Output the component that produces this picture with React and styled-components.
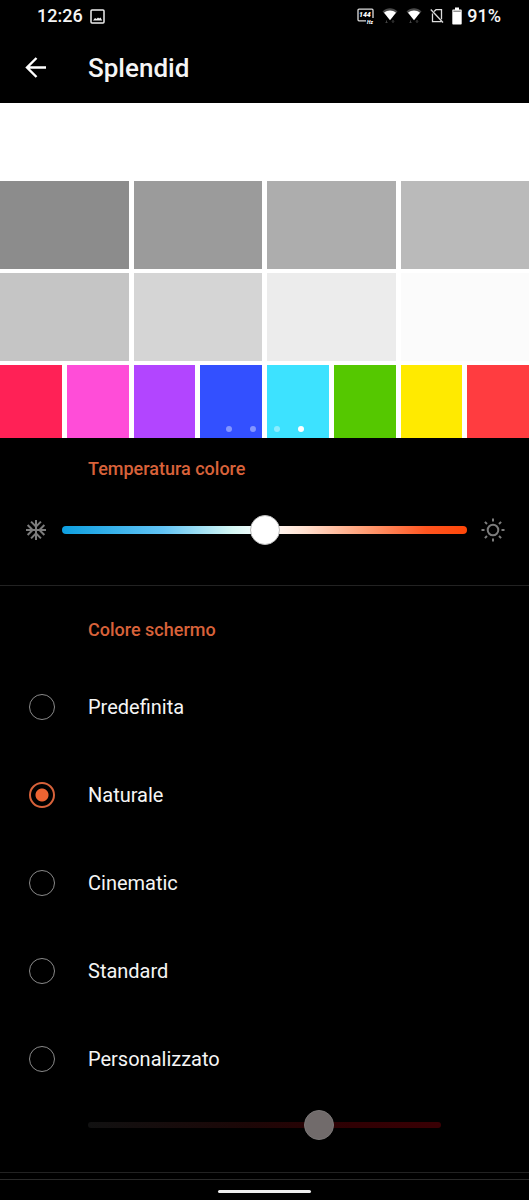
import { useState } from "react";
import styled, { createGlobalStyle } from "styled-components";

const GlobalStyle = createGlobalStyle`
  * {
    box-sizing: border-box;
  }

  body {
    margin: 0;
    background: #000;
    color: #f5f5f5;
    font-family: Roboto, "Liberation Sans", sans-serif;
  }
`;

const Screen = styled.div`
  display: flex;
  flex-direction: column;
  width: 100%;
  background: #000;
`;

const StatusBar = styled.div`
  display: flex;
  align-items: center;
  justify-content: space-between;
  height: 32px;
  padding: 0 28px 0 37px;
  font-size: 18px;
  font-weight: 500;
  line-height: 32px;
`;

const StatusGroup = styled.div`
  display: flex;
  align-items: center;
  gap: ${({ $gap }) => $gap}px;
`;

const StatusIcon = styled.svg`
  display: block;
  flex: none;
`;

const Header = styled.header`
  display: flex;
  align-items: center;
  gap: 36px;
  height: 71px;
  padding: 0 20px;
`;

const BackButton = styled.button`
  display: grid;
  place-items: center;
  width: 32px;
  height: 32px;
  padding: 0;
  border: 0;
  background: none;
  color: #fff;
  cursor: pointer;
`;

const Title = styled.h1`
  margin: 0;
  font-size: 26px;
  font-weight: 500;
  line-height: 32px;
`;

const Preview = styled.div`
  position: relative;
  display: flex;
  flex-direction: column;
  gap: 4px;
  padding-top: 78px;
  background: #fff;
`;

const SwatchRow = styled.div`
  display: flex;
  gap: 5px;
  height: ${({ $height }) => $height}px;
`;

const Swatch = styled.div`
  flex: 1;
  background: ${({ $color }) => $color};
`;

const Dots = styled.div`
  position: absolute;
  left: 0;
  right: 0;
  bottom: 6px;
  display: flex;
  justify-content: center;
  gap: 18px;
`;

const Dot = styled.button`
  width: 6px;
  height: 6px;
  padding: 0;
  border: 0;
  border-radius: 50%;
  background: ${({ $active }) => ($active ? "#fff" : "rgba(255, 255, 255, 0.4)")};
`;

const Section = styled.section`
  padding: ${({ $padding }) => $padding};
  border-bottom: 1px solid #222;
`;

const SectionTitle = styled.h2`
  margin: 0;
  padding-left: 88px;
  color: #d8623a;
  font-size: 18px;
  font-weight: 500;
  line-height: 24px;
`;

const TemperatureRow = styled.div`
  display: flex;
  align-items: center;
  gap: 14px;
  margin-top: 33px;
  padding: 0 24px;
  color: #7c7c7c;
`;

const Slider = styled.input`
  appearance: none;
  flex: 1;
  display: block;
  width: 100%;
  min-width: 0;
  height: 32px;
  margin: 0;
  background: none;

  &::-webkit-slider-runnable-track {
    height: ${({ $thickness }) => $thickness}px;
    border-radius: 4px;
    background: ${({ $track }) => $track};
  }

  &::-webkit-slider-thumb {
    appearance: none;
    width: 30px;
    height: 30px;
    margin-top: ${({ $thickness }) => ($thickness - 30) / 2}px;
    border: 1px solid ${({ $edge }) => $edge};
    border-radius: 50%;
    background: ${({ $thumb }) => $thumb};
  }
`;

const Options = styled.div`
  margin-top: 21px;
`;

const Option = styled.label`
  display: flex;
  align-items: center;
  gap: 33px;
  height: 88px;
  padding-left: 29px;
  font-size: 20px;
  line-height: 24px;
  cursor: pointer;
`;

const Radio = styled.input`
  appearance: none;
  width: 26px;
  height: 26px;
  margin: 0;
  border: 1px solid #8a8a8a;
  border-radius: 50%;

  &:checked {
    border: 2px solid #d8623a;
    background: radial-gradient(circle, #ee6432 6px, transparent 7px);
  }
`;

const CustomTint = styled.div`
  padding: 6px 88px 31px;
`;

const Footer = styled.footer`
  display: flex;
  justify-content: center;
  height: 22px;
  margin-top: 6px;
  padding-top: 10px;
  border-top: 1px solid #2a2a2a;
`;

const HomeBar = styled.div`
  width: 93px;
  height: 3px;
  border-radius: 2px;
  background: #eee;
`;

const grays = [
  ["#8c8c8c", "#9b9b9b", "#adadad", "#bababa"],
  ["#c5c5c5", "#d5d5d5", "#ececec", "#fbfbfb"],
];

const colors = [
  "#ff2156",
  "#ff4dd8",
  "#b245ff",
  "#3350ff",
  "#3de2ff",
  "#55c800",
  "#ffea00",
  "#ff3c40",
];

const modes = [
  "Predefinita",
  "Naturale",
  "Cinematic",
  "Standard",
  "Personalizzato",
];

function PictureIcon() {
  return (
    <StatusIcon width="15" height="15" viewBox="0 0 15 15" fill="none">
      <rect x="1" y="1" width="13" height="13" rx="1" stroke="#eee" strokeWidth="1.5" />
      <path d="M3 11.5 5 9l1.5 1L8 8.500l1.200 1L10.500 8.500l1.700 3z" fill="#eee" />
    </StatusIcon>
  );
}

function RefreshRateIcon() {
  return (
    <StatusIcon width="17" height="16" viewBox="0 0 17 16">
      <path
        d="M9 12.800H2a1 1 0 0 1-1-1V2.200a1 1 0 0 1 1-1h13a1 1 0 0 1 1 1V10"
        fill="none"
        stroke="#ddd"
        strokeWidth="1.3"
      />
      <text x="2" y="8.800" fill="#fff" fontSize="7" fontWeight="900" fontStyle="italic">
        144
      </text>
      <text x="10" y="15.800" fill="#fff" fontSize="5" fontWeight="900" fontStyle="italic">
        Hz
      </text>
    </StatusIcon>
  );
}

function WifiIcon() {
  return (
    <StatusIcon width="16" height="16" viewBox="0 0 16 16">
      <path d="M.5 3.400C5-.8 11-.8 15.500 3.400L13.700 5.600C10.500 2.200 5.500 2.200 2.300 5.600z" fill="#4a4a4a" />
      <path d="M2 4.700C5.500 1.700 10.500 1.700 14 4.700L8 12.300z" fill="#fff" />
      <path d="M4.500 12.500v2.500M3.500 14l1 1 1-1M11 15v-2.500M10 13.500l1-1 1 1" fill="none" stroke="#444" />
    </StatusIcon>
  );
}

function NoSimIcon() {
  return (
    <StatusIcon width="14" height="16" viewBox="0 0 14 16" fill="none" stroke="#ddd" strokeWidth="1.3">
      <path d="M4 3.500 6 1.700h5.500v9.500M2.500 5.500v8.200h9" />
      <path d="M.8 1.500 13 14.500" />
    </StatusIcon>
  );
}

function BatteryIcon() {
  return (
    <StatusIcon width="10" height="18" viewBox="0 0 10 18">
      <path d="M3 .5h4v2h2q.7 0 .7.7v13.600q0 .7-.7.7H1q-.7 0-.7-.7V3.200q0-.7.7-.7h2z" fill="#fff" />
      <path d="M1.300 4.200h7.400" stroke="#666" strokeWidth="1" />
    </StatusIcon>
  );
}

function BackIcon() {
  return (
    <svg width="22" height="22" viewBox="0 0 22 22" fill="none" stroke="currentColor" strokeWidth="2.4">
      <path d="M21 10.500H2.500M11.500 1 2 10.500l9.500 9.500" />
    </svg>
  );
}

function SnowIcon() {
  return (
    <StatusIcon width="24" height="24" viewBox="0 0 24 24" fill="currentColor">
      <path d="M22 11h-4.170l3.240-3.240-1.410-1.420L15 11h-2V9l4.660-4.660-1.420-1.410L13 6.170V2h-2v4.170L7.760 2.930 6.340 4.340 11 9v2H9L4.340 6.340 2.930 7.760 6.170 11H2v2h4.170l-3.240 3.240 1.410 1.420L9 13h2v2l-4.660 4.660 1.420 1.410L11 17.830V22h2v-4.170l3.240 3.240 1.420-1.410L13 15v-2h2l4.660 4.660 1.410-1.420L17.830 13H22z" />
    </StatusIcon>
  );
}

function SunIcon() {
  return (
    <StatusIcon width="24" height="24" viewBox="0 0 24 24" fill="none" stroke="currentColor" strokeWidth="2">
      <circle cx="12" cy="12" r="5.300" />
      <path d="M12 .5v3M12 20.500v3M.5 12h3M20.500 12h3M3.900 3.900 6 6M18 18l2.100 2.100M3.900 20.100 6 18M18 6l2.100-2.100" />
    </StatusIcon>
  );
}

function App() {
  const [mode, setMode] = useState("Naturale");
  const [temperature, setTemperature] = useState(50);

  return (
    <Screen>
      <GlobalStyle />

      <StatusBar>
        <StatusGroup $gap={7}>
          <span>12:26</span>
          <PictureIcon />
        </StatusGroup>
        <StatusGroup $gap={8}>
          <RefreshRateIcon />
          <WifiIcon />
          <WifiIcon />
          <NoSimIcon />
          <StatusGroup $gap={5}>
            <BatteryIcon />
            <span>91%</span>
          </StatusGroup>
        </StatusGroup>
      </StatusBar>

      <Header>
        <BackButton aria-label="Indietro">
          <BackIcon />
        </BackButton>
        <Title>Splendid</Title>
      </Header>

      <main>
        <Preview>
          {grays.map((row) => (
            <SwatchRow key={row[0]} $height={88}>
              {row.map((color) => (
                <Swatch key={color} $color={color} />
              ))}
            </SwatchRow>
          ))}
          <SwatchRow $height={73}>
            {colors.map((color) => (
              <Swatch key={color} $color={color} />
            ))}
          </SwatchRow>
          <Dots>
            {[1, 2, 3, 4].map((page) => (
              <Dot key={page} $active={page === 4} aria-label={`Pagina ${page}`} />
            ))}
          </Dots>
        </Preview>

        <Section $padding="19px 0 39px">
          <SectionTitle id="temperature">Temperatura colore</SectionTitle>
          <TemperatureRow>
            <SnowIcon />
            <Slider
              type="range"
              aria-labelledby="temperature"
              value={temperature}
              onChange={(e) => setTemperature(Number(e.target.value))}
              $thickness={8}
              $track="linear-gradient(90deg, #0d9fe0, #62c4f5 25%, #d5f8f5 42%, #fff 50%, #ffdfce 60%, #ff9d74 75%, #ff5520 90%, #ff4709)"
              $thumb="#fff"
              $edge="#bbb"
            />
            <SunIcon />
          </TemperatureRow>
        </Section>

        <Section $padding="32px 0 0">
          <SectionTitle id="screen-color">Colore schermo</SectionTitle>
          <Options role="radiogroup" aria-labelledby="screen-color">
            {modes.map((name) => (
              <Option key={name}>
                <Radio
                  type="radio"
                  name="mode"
                  checked={mode === name}
                  onChange={() => setMode(name)}
                />
                {name}
              </Option>
            ))}
          </Options>
          <CustomTint>
            <Slider
              type="range"
              aria-label="Rosso"
              defaultValue={67}
              disabled
              $thickness={6}
              $track="linear-gradient(90deg, #111, #1c0707 45%, #300003 75%, #3a0004)"
              $thumb="#716b6b"
              $edge="#7b7777"
            />
          </CustomTint>
        </Section>
      </main>

      <Footer>
        <HomeBar />
      </Footer>
    </Screen>
  );
}

export default App;
